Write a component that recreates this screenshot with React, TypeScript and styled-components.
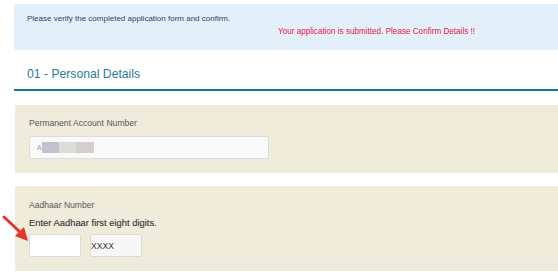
import React from "react";
import styled, { createGlobalStyle } from "styled-components";

const GlobalStyle = createGlobalStyle`
  html, body {
    margin: 0;
    padding: 0;
    background: #ffffff;
    font-family: "Liberation Sans", Arial, sans-serif;
    overflow: hidden;
  }
`;

const Page = styled.div`
  width: 558px;
  height: 275px;
  padding: 4px 0 0 14px;
  box-sizing: border-box;
  overflow: hidden;
`;

const Alert = styled.div`
  height: 46px;
  margin-right: -10px;
  background: #e3f0fa;
  border-radius: 3px;
  padding: 10px 0 0 13px;
  box-sizing: border-box;
  font-size: 8px;
`;

const Notice = styled.div`
  color: #2f4468;
  line-height: 10px;
`;

const Submitted = styled.div`
  color: #e8174a;
  line-height: 10px;
  margin: 3px 0 0 251px;
  font-size: 8.15px;
`;

const Heading = styled.h2`
  margin: 17px 0 0;
  padding: 0 0 8px 13px;
  font-size: 12.2px;
  line-height: 14px;
  font-weight: normal;
  color: #2b7c9c;
  border-bottom: 2px solid #0e7a94;
`;

const Panel = styled.div<{ $top: number; $height: number }>`
  margin-top: ${p => p.$top}px;
  margin-left: 1px;
  height: ${p => p.$height}px;
  background: #efecdc;
  padding: 13px 0 0 14px;
  box-sizing: border-box;
  position: relative;
`;

const Label = styled.div`
  font-size: 8.6px;
  line-height: 11px;
  color: #5a5a5a;
`;

const Hint = styled.div`
  font-size: 9.4px;
  line-height: 11px;
  color: #3a3a3a;
  margin-top: 6px;
  -webkit-text-stroke: 0.15px #3a3a3a;
`;

const Input = styled.div<{ $width: number; $bg: string }>`
  width: ${p => p.$width}px;
  height: 23px;
  background: ${p => p.$bg};
  border: 1px solid #dcdcdc;
  border-radius: 2px;
  box-sizing: border-box;
  display: flex;
  align-items: center;
  font-size: 8.6px;
  color: #333;
`;

const Row = styled.div<{ $top: number }>`
  display: flex;
  gap: 9px;
  margin-top: ${p => p.$top}px;
`;

const Blur = styled.span<{ $c: string; $w: number }>`
  display: inline-block;
  width: ${p => p.$w}px;
  height: 11px;
  background: ${p => p.$c};
`;

const Masked = styled.div`
  display: flex;
  align-items: center;
  padding-left: 7px;
  color: #9a9a9a;
  font-size: 7px;
`;

const Arrow = styled.svg`
  position: absolute;
  left: -15px;
  top: 28px;
`;

export default function App() {
  return (
    <>
      <GlobalStyle />
      <Page>
        <Alert>
          <Notice>Please verify the completed application form and confirm.</Notice>
          <Submitted>Your application is submitted. Please Confirm Details !!</Submitted>
        </Alert>
        <Heading>01 - Personal Details</Heading>
        <Panel $top={14} $height={68}>
          <Label>Permanent Account Number</Label>
          <Row $top={7}>
            <Input $width={240} $bg="#f9f9f9">
              <Masked>
                <span>A</span>
                <Blur $c="#c0c3cc" $w={17} />
                <Blur $c="#dcdcd9" $w={17} />
                <Blur $c="#d4cfcb" $w={18} />
              </Masked>
            </Input>
          </Row>
        </Panel>
        <Panel $top={13} $height={85}>
          <Label style={{ marginTop: 1 }}>Aadhaar Number</Label>
          <Hint>Enter Aadhaar first eight digits.</Hint>
          <Row $top={6}>
            <Input $width={52} $bg="#ffffff" />
            <Input $width={52} $bg="#f7f7f7">XXXX</Input>
          </Row>
          <Arrow width="32" height="30" viewBox="0 0 32 30">
            <line x1="4" y1="3" x2="20" y2="18" stroke="#e8322c" strokeWidth="3" strokeLinecap="round" />
            <polygon points="28,27 15,22 24,13" fill="#e8322c" />
          </Arrow>
        </Panel>
      </Page>
    </>
  );
}
